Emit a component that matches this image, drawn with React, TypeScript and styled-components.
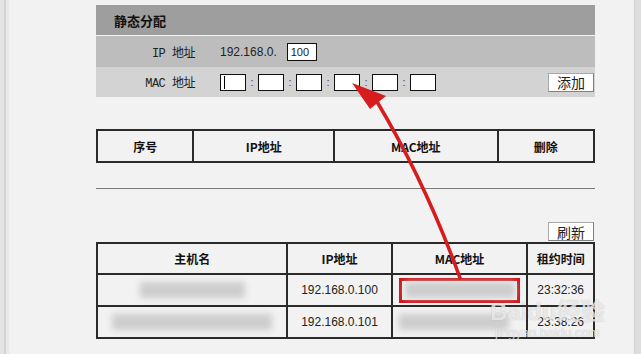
import React from "react";
import styled, { createGlobalStyle } from "styled-components";

const GlobalStyle = createGlobalStyle`
  html, body {
    margin: 0;
    padding: 0;
    background: #f2f2f2;
  }
  body {
    font-family: "Liberation Sans", "Noto Sans CJK SC", sans-serif;
    font-size: 12px;
    color: #111;
  }
`;

const Page = styled.div`
  position: relative;
  display: flex;
  width: 641px;
  height: 354px;
  overflow: hidden;
  background: #f2f2f2;
`;

const LeftEdge = styled.div`
  width: 9px;
  flex: none;
  background: linear-gradient(
    to right,
    #e4e4e4 0 4px,
    #d4d4d4 4px 6px,
    #e9e9e9 6px 9px
  );
`;

const RightEdge = styled.div`
  width: 6px;
  flex: none;
  background: #dedede;
  border-left: 1px solid #d2d2d2;
`;

const Main = styled.div`
  flex: 1;
  padding: 5px 0 0 87px;
`;

const Panel = styled.div`
  width: 499px;
  display: flex;
  flex-direction: column;
`;

const Title = styled.div`
  height: 30px;
  display: flex;
  align-items: center;
  padding-left: 18px;
  background: #9e9e9e;
  border-bottom: 1px solid #f4f4f4;
  font-family: "Noto Sans CJK SC", sans-serif;
  font-weight: 700;
  font-size: 13px;
  color: #111;
`;

const FormRow = styled.div<{ $tone: string; $h: number }>`
  height: ${({ $h }) => $h}px;
  display: flex;
  align-items: center;
  background: ${({ $tone }) => $tone};
`;

const Label = styled.div`
  width: 99px;
  flex: none;
  text-align: right;
  font-family: "Liberation Mono", "Noto Sans CJK SC", monospace;
  font-size: 12px;
  color: #222;
  letter-spacing: -0.5px;
`;

const Value = styled.div`
  margin-left: 25px;
  display: flex;
  align-items: center;
  flex: 1;
  color: #222;
`;

const Field = styled.div<{ $w: number; $h?: number }>`
  width: ${({ $w }) => $w}px;
  height: ${({ $h }) => $h ?? 17}px;
  box-sizing: border-box;
  background: #fff;
  border: 1px solid #111;
  display: flex;
  align-items: center;
  padding-left: 3px;
  font-size: 11px;
`;

const Caret = styled.span`
  width: 1px;
  height: 13px;
  background: #000;
`;

const Colon = styled.span`
  width: 12px;
  text-align: center;
  font-size: 11px;
  color: #444;
`;

const Button = styled.div`
  margin-left: auto;
  margin-right: 1px;
  width: 46px;
  height: 19px;
  box-sizing: border-box;
  background: #fff;
  border: 1px solid #a8a8a8;
  border-right-color: #808080;
  border-bottom-color: #808080;
  display: flex;
  align-items: center;
  justify-content: center;
  font-family: "Noto Sans CJK SC", sans-serif;
  font-size: 14px;
  color: #222;
`;

const Table = styled.table<{ $top: number }>`
  margin-top: ${({ $top }) => $top}px;
  width: 499px;
  border-collapse: collapse;
  table-layout: fixed;
  border: 2px solid #2a2a2a;
`;

const Col = styled.col<{ $pct: number }>`
  width: ${({ $pct }) => $pct}%;
`;

const Th = styled.th<{ $h?: number }>`
  height: ${({ $h }) => $h ?? 30}px;
  padding: 0;
  border: 2px solid #2a2a2a;
  font-family: "Noto Sans CJK SC", sans-serif;
  font-weight: 700;
  font-size: 12px;
  color: #111;
  text-align: center;
`;

const Td = styled.td`
  height: 30px;
  padding: 0;
  border: 2px solid #2a2a2a;
  text-align: center;
  font-size: 12px;
  color: #222;
`;

const Cell = styled.div<{ $align?: string }>`
  display: flex;
  align-items: center;
  justify-content: ${({ $align }) => $align ?? "center"};
  padding: 0 6px;
`;

const Blur = styled.div<{ $w: number }>`
  width: ${({ $w }) => $w}px;
  height: 16px;
  background: #cdcdcd;
  filter: blur(3px);
`;

const Highlight = styled.div`
  width: 123px;
  height: 25px;
  box-sizing: border-box;
  border: 3px solid #d0161a;
  display: flex;
  align-items: center;
  justify-content: center;
`;

const Divider = styled.div`
  margin-top: 25px;
  height: 1px;
  background: #7a7a7a;
`;

const RefreshRow = styled.div`
  margin-top: 33px;
  display: flex;
`;

const Watermark = styled.div`
  position: absolute;
  left: 490px;
  top: 298px;
  display: flex;
  flex-direction: column;
  align-items: center;
  color: rgba(255, 255, 255, 0.7);
  text-shadow: 0 0 1px rgba(120, 120, 120, 0.5);
  pointer-events: none;
`;

const MarkLogo = styled.div`
  font-family: "Liberation Sans", "Noto Sans CJK SC", sans-serif;
  font-size: 24px;
  font-weight: 700;
  line-height: 27px;
`;

const MarkUrl = styled.div`
  font-family: "Liberation Sans", sans-serif;
  font-size: 13px;
  line-height: 16px;
`;

const Overlay = styled.svg`
  position: absolute;
  left: 0;
  top: 0;
  pointer-events: none;
`;

const macFields = [0, 1, 2, 3, 4, 5];

export default function App() {
  return (
    <>
      <GlobalStyle />
      <Page>
        <LeftEdge />
        <Main>
          <Panel>
            <Title>静态分配</Title>
            <FormRow $tone="#bdbdbd" $h={31}>
              <Label>IP 地址</Label>
              <Value>
                <span>192.168.0.</span>
                <Field $w={30} $h={18} style={{ marginLeft: 10 }}>
                  100
                </Field>
              </Value>
            </FormRow>
            <FormRow $tone="#d3d3d3" $h={30}>
              <Label>MAC 地址</Label>
              <Value>
                {macFields.map((i) => (
                  <React.Fragment key={i}>
                    {i > 0 && <Colon>:</Colon>}
                    <Field $w={26}>{i === 0 && <Caret />}</Field>
                  </React.Fragment>
                ))}
                <Button>添加</Button>
              </Value>
            </FormRow>

            <Table $top={32}>
              <colgroup>
                <Col $pct={19.4} />
                <Col $pct={28.3} />
                <Col $pct={32.9} />
                <Col $pct={19.4} />
              </colgroup>
              <thead>
                <tr>
                  <Th>序号</Th>
                  <Th>IP地址</Th>
                  <Th>MAC地址</Th>
                  <Th>删除</Th>
                </tr>
              </thead>
            </Table>

            <Divider />

            <RefreshRow>
              <Button>刷新</Button>
            </RefreshRow>

            <Table $top={1}>
              <colgroup>
                <Col $pct={38.3} />
                <Col $pct={21} />
                <Col $pct={27.3} />
                <Col $pct={13.4} />
              </colgroup>
              <thead>
                <tr>
                  <Th $h={29}>主机名</Th>
                  <Th $h={29}>IP地址</Th>
                  <Th $h={29}>MAC地址</Th>
                  <Th $h={29}>租约时间</Th>
                </tr>
              </thead>
              <tbody>
                <tr>
                  <Td>
                    <Cell>
                      <Blur $w={105} />
                    </Cell>
                  </Td>
                  <Td>192.168.0.100</Td>
                  <Td>
                    <Cell>
                      <Highlight>
                        <Blur $w={110} />
                      </Highlight>
                    </Cell>
                  </Td>
                  <Td>23:32:36</Td>
                </tr>
                <tr>
                  <Td>
                    <Cell>
                      <Blur $w={160} />
                    </Cell>
                  </Td>
                  <Td>192.168.0.101</Td>
                  <Td>
                    <Cell $align="flex-start">
                      <Blur $w={110} />
                    </Cell>
                  </Td>
                  <Td>23:38:26</Td>
                </tr>
              </tbody>
            </Table>
          </Panel>
        </Main>
        <RightEdge />

        <Watermark>
          <MarkLogo>Baidu经验</MarkLogo>
          <MarkUrl>jingyan.baidu.com</MarkUrl>
        </Watermark>

        <Overlay width="641" height="354" viewBox="0 0 641 354">
          <path
            d="M 376 100 C 400 140, 432 200, 460 278"
            fill="none"
            stroke="#d61c1c"
            strokeWidth="3.5"
            strokeLinecap="round"
          />
          <path d="M 352 83 L 386 96 L 370 109 Z" fill="#d61c1c" />
        </Overlay>
      </Page>
    </>
  );
}
